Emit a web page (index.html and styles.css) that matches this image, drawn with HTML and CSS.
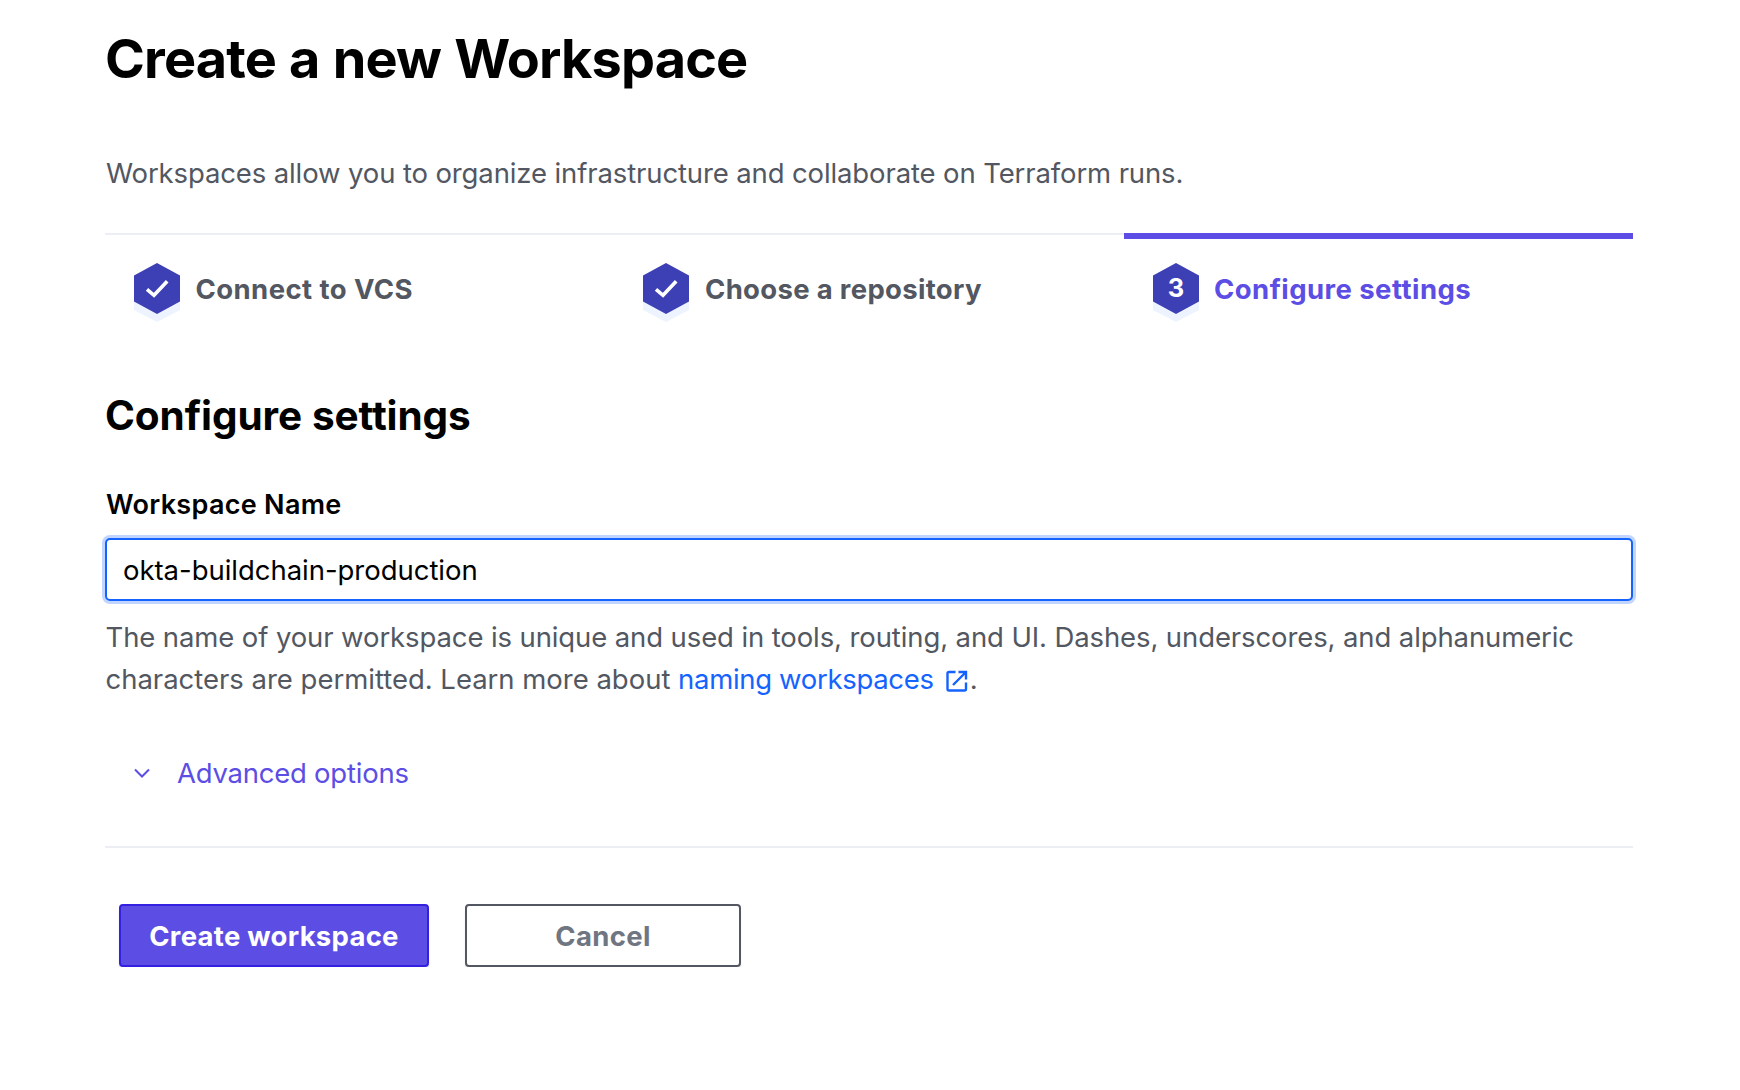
FILE: index.html
```html
<!DOCTYPE html>
<html lang="en">
<head>
<meta charset="utf-8">
<title>Create a new Workspace</title>
<link rel="stylesheet" href="styles.css">
</head>
<body>
<main class="page">
  <h1 class="title">Create a new Workspace</h1>
  <p class="intro">Workspaces allow you to organize infrastructure and collaborate on Terraform runs.</p>

  <ol class="steps">
    <li class="step">
      <svg class="hex" viewBox="0 0 46 59" aria-hidden="true">
        <path fill="#edf4ff" d="M0 20h46v27L23 59 0 47z"/>
        <path fill="#3d3fb5" d="M23 0l23 12.500v26L23 51 0 38.500v-26z"/>
        <path fill="none" stroke="#fff" stroke-width="3.600" d="M13 26.300l7 6L33.200 18.200"/>
      </svg>
      <span class="step-name step-connect">Connect to VCS</span>
    </li>
    <li class="step">
      <svg class="hex" viewBox="0 0 46 59" aria-hidden="true">
        <path fill="#edf4ff" d="M0 20h46v27L23 59 0 47z"/>
        <path fill="#3d3fb5" d="M23 0l23 12.500v26L23 51 0 38.500v-26z"/>
        <path fill="none" stroke="#fff" stroke-width="3.600" d="M13 26.300l7 6L33.200 18.200"/>
      </svg>
      <span class="step-name step-choose">Choose a repository</span>
    </li>
    <li class="step step-active">
      <svg class="hex" viewBox="0 0 46 59" aria-hidden="true">
        <path fill="#edf4ff" d="M0 20h46v27L23 59 0 47z"/>
        <path fill="#3d3fb5" d="M23 0l23 12.500v26L23 51 0 38.500v-26z"/>
        <text class="hex-number" x="23" y="34" text-anchor="middle">3</text>
      </svg>
      <span class="step-name step-configure">Configure settings</span>
    </li>
  </ol>

  <h2 class="heading">Configure settings</h2>
  <form class="form">
    <label class="label" for="name">Workspace Name</label>
    <input class="input" id="name" type="text" value="okta-buildchain-production">
    <p class="help"><span class="help-line">The name of your workspace is unique and used in tools, routing, and UI. Dashes, underscores, and alphanumeric</span> characters are permitted. Learn more about <a class="link" href="#">naming workspaces</a><svg class="external" viewBox="0 0 22 22" aria-hidden="true"><path d="M9.500 2H3Q1.500 2 1.500 3.500V19Q1.500 20.500 3 20.500H18.500Q20 20.500 20 19V12.500M12.500 2H20V9.500M20 2L7 15"/></svg>.</p>

    <a class="advanced" href="#">
      <svg class="chevron" viewBox="0 0 16 10" aria-hidden="true"><path d="M1 1.500l7 7 7-7"/></svg>
      <span>Advanced options</span>
    </a>

    <div class="actions">
      <button class="button button-primary" type="button">Create workspace</button>
      <button class="button button-cancel" type="button">Cancel</button>
    </div>
  </form>
</main>
</body>
</html>
```
FILE: styles.css
```css
* {
  box-sizing: border-box;
}

body {
  margin: 0;
  background: #fff;
  color: #000;
  font-family: Inter, "Liberation Sans", sans-serif;
  font-size: 27.5px;
  line-height: 42px;
}

.page {
  display: flex;
  flex-direction: column;
  width: 1633px;
  padding: 27px 0 0 105px;
}

.title {
  margin: 0 0 61px;
  font-size: 54px;
  line-height: 64px;
  font-weight: 700;
  letter-spacing: -0.85px;
  word-spacing: 1.2px;
}

.intro {
  margin: 0 0 39px 1px;
  color: #525761;
  letter-spacing: -0.125px;
}

.steps {
  display: grid;
  grid-template-columns: 509px 510px 509px;
  margin: 0;
  padding: 0;
  list-style: none;
}

.step {
  display: flex;
  align-items: flex-start;
  height: 96px;
  padding: 28px 0 0 29px;
  border-top: 2px solid #ebeef2;
  color: #525761;
}

.step-active {
  padding-top: 24px;
  border-top: 6px solid #5c4ee5;
  color: #5c4ee5;
}

.hex {
  flex: none;
  width: 46px;
  height: 59px;
  margin-right: 15px;
}

.hex-number {
  fill: #fff;
  font-size: 25.5px;
  font-weight: 700;
}

.step-name {
  margin-top: 5px;
  font-weight: 700;
}

.step-connect {
  margin-left: 0.5px;
  letter-spacing: 0.42px;
}

.step-choose {
  margin-left: 1px;
  letter-spacing: 0.32px;
}

.step-configure {
  letter-spacing: 0.44px;
}

.heading {
  margin: 62px 0 0;
  font-size: 40.5px;
  line-height: 50px;
  font-weight: 700;
  letter-spacing: -0.1px;
  word-spacing: 0.5px;
}

.form {
  display: flex;
  flex-direction: column;
}

.label {
  margin: 46px 0 15px 1px;
  font-size: 27px;
  line-height: 36px;
  font-weight: 600;
  letter-spacing: 0.3px;
}

.input {
  width: 100%;
  height: 63px;
  padding: 1px 16px 0;
  border: 2px solid #1563ff;
  border-radius: 5px;
  outline: none;
  box-shadow: 0 0 0 3px #c2d5ff;
  color: #000;
  font: inherit;
  letter-spacing: -0.03px;
}

.help {
  margin: 15px 0 0 0.5px;
  color: #525761;
  letter-spacing: -0.02px;
}

.help-line {
  display: block;
  letter-spacing: -0.11px;
}

.link {
  color: #1563ff;
  letter-spacing: -0.32px;
  text-decoration: none;
}

.external {
  width: 22px;
  height: 22px;
  margin: 0 2px 0 12px;
  vertical-align: -3px;
}

.external path {
  fill: none;
  stroke: #1563ff;
  stroke-width: 2.4;
}

.advanced {
  display: flex;
  align-items: center;
  gap: 27.5px;
  height: 42px;
  margin: 52px 0 0 28.5px;
  color: #5c4ee5;
  letter-spacing: -0.24px;
  text-decoration: none;
}

.chevron {
  width: 16px;
  height: 10px;
  margin-bottom: 1px;
}

.chevron path {
  fill: none;
  stroke: #5c4ee5;
  stroke-width: 2;
}

.actions {
  display: flex;
  gap: 36px;
  margin-top: 52px;
  padding: 56px 14px 0;
  border-top: 2px solid #ebeef2;
}

.button {
  height: 63px;
  padding: 0;
  border: 2px solid;
  border-radius: 4px;
  font: inherit;
  font-weight: 700;
}

.button-primary {
  width: 310px;
  background: #5c4ee5;
  border-color: #3320e0;
  box-shadow: 0 5px 2px #e1e2e6;
  color: #fff;
  letter-spacing: 0.27px;
}

.button-cancel {
  width: 276px;
  background: #fff;
  border-color: #525761;
  box-shadow: 0 5px 2px #ebecee;
  color: #6f7682;
  letter-spacing: 0.35px;
}
```
